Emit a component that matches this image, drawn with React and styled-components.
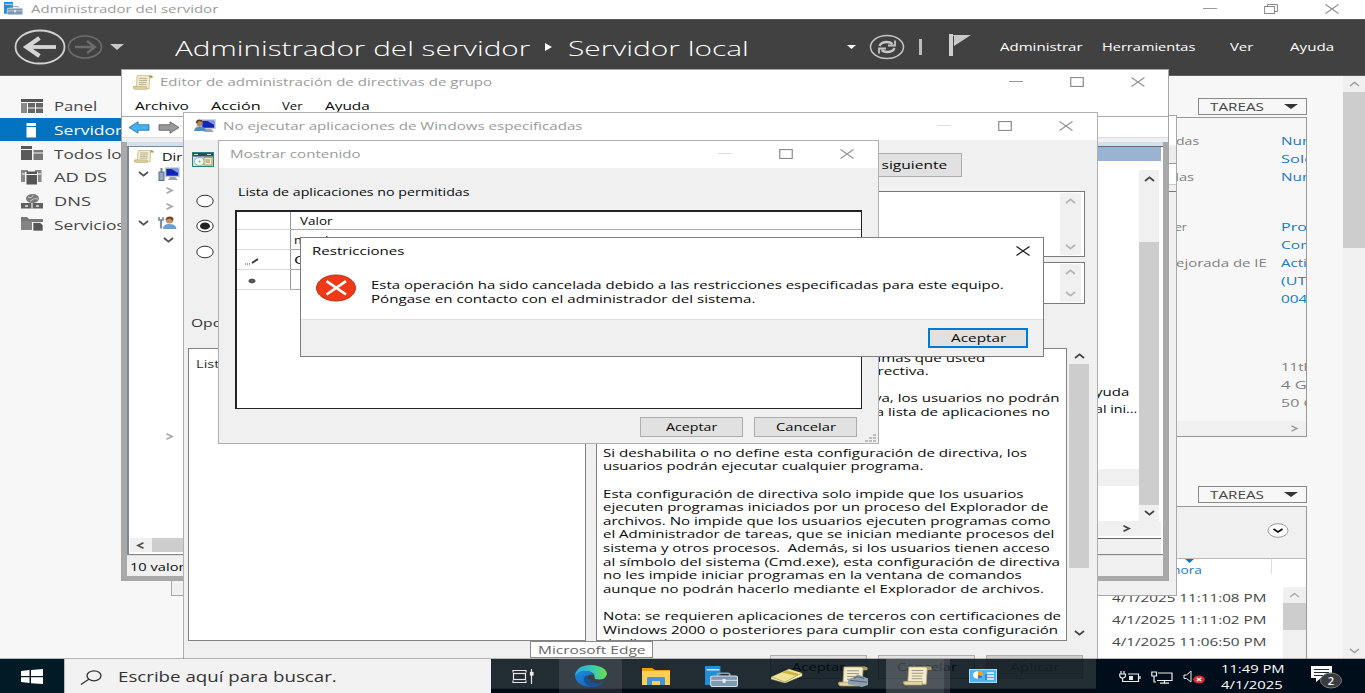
import React, { useLayoutEffect, useRef, useState } from "react";
import styled, { createGlobalStyle, css } from "styled-components";

const Global = createGlobalStyle`
  * { box-sizing: border-box; }
  html, body { margin: 0; padding: 0; overflow: hidden; }
  body { font-family: "Open Sans", "Noto Sans", sans-serif; color: #1a1a1a; }
  svg { display: block; flex: none; }
`;

/* ---------- text ---------- */

const FitBox = styled.span`
  display: block;
  flex: none;
  width: ${(p) => (p.$w ? `${p.$w}px` : "auto")};
  height: ${(p) => p.$lh}px;
  line-height: ${(p) => p.$lh}px;
  font-size: ${(p) => p.$size}px;
  font-weight: ${(p) => p.$weight};
  color: ${(p) => p.$color};
  text-align: left;
  white-space: pre;
`;
const FitInner = styled.span`
  display: inline-block;
  transform-origin: 0 50%;
`;

/* Wide-set label: stretched horizontally to w pixels, or by factor k. */
function Label({ w, k = 1.38, size = 10.6, lh = 14, weight = 500, color = "#080808", children }) {
  const ref = useRef(null);
  const [scale, setScale] = useState(k);
  useLayoutEffect(() => {
    if (w && ref.current) setScale(w / ref.current.offsetWidth);
  }, [w]);
  return (
    <FitBox $w={w} $size={size} $lh={lh} $weight={weight} $color={color}>
      <FitInner ref={ref} style={{ transform: `scaleX(${scale})` }}>{children}</FitInner>
    </FitBox>
  );
}

/* ---------- small drawings ---------- */

const CHEVRONS = {
  up: [11, 6, "M1 5 L5.5 1.4 L10 5"],
  down: [11, 6, "M1 1 L5.5 4.6 L10 1"],
  left: [9, 7, "M7.5 .8 L2 3.5 L7.5 6.2"],
  right: [9, 7, "M1.5 .8 L7 3.5 L1.5 6.2"],
};
function Chevron({ dir, color = "#505050", sw = 1.8 }) {
  const [w, h, d] = CHEVRONS[dir];
  return (
    <svg width={w} height={h} viewBox={`0 0 ${w} ${h}`}>
      <path d={d} fill="none" stroke={color} strokeWidth={sw} />
    </svg>
  );
}
const Triangle = ({ w = 14, h = 6, color = "#333" }) => (
  <svg width={w} height={h} viewBox="0 0 14 6" preserveAspectRatio="none">
    <path d="M0 0H14L7 6Z" fill={color} />
  </svg>
);
const MinIcon = ({ color = "#999" }) => (
  <svg width="14" height="10" viewBox="0 0 14 10"><path d="M0 4.5H14" stroke={color} /></svg>
);
const MaxIcon = () => (
  <svg width="14" height="10" viewBox="0 0 14 10"><rect x=".75" y=".5" width="12.5" height="9" fill="none" stroke="#8a8a8a" strokeWidth="1.2" /></svg>
);
const RestoreIcon = () => (
  <svg width="14" height="10" viewBox="0 0 14 10" fill="none" stroke="#8a8a8a"><rect x=".6" y="2.5" width="10" height="7" /><path d="M3.5 2.5V.5H13.4V7.5H10.6" /></svg>
);
const CloseIcon = ({ color = "#8f8f8f", sw = 1.1 }) => (
  <svg width="14" height="10" viewBox="0 0 14 10"><path d="M.5 .5L13.5 9.5M13.5 .5L.5 9.5" stroke={color} strokeWidth={sw} /></svg>
);
const ServerIcon = ({ w = 20, h = 14 }) => (
  <svg width={w} height={h} viewBox="0 0 32 22" preserveAspectRatio="none">
    <path d="M0 0H15V10H6V20H0Z" fill="#1f8fd8" /><path d="M1.5 4H14" stroke="#fff" strokeWidth="1.2" />
    <path d="M12 11V9Q12 7.5 14 7.5H22Q24 7.5 24 9V11" fill="none" stroke="#8ba3b6" strokeWidth="1.6" />
    <rect x="5.5" y="10.5" width="26" height="11" rx="1.5" fill="#7f9ab0" stroke="#d5e2ec" /><path d="M6 15H31" stroke="#dbe7ef" /><rect x="17" y="13.5" width="3" height="4" fill="#e5eef4" />
  </svg>
);
const ScrollIcon = ({ w = 20, h = 15, box = false }) => (
  <svg width={w} height={h} viewBox="0 0 30 22" preserveAspectRatio="none">
    <path d="M6 1H27Q30 1 29 4H25L24 20H2Q0 20 1 17H5Z" fill="#f3eccb" stroke="#b3a473" strokeWidth=".9" />
    <path d="M24 1Q29 0 29 4H25Z" fill="#b0954c" /><path d="M1 17H20V21H3Q0 21 1 17Z" fill="#e2d5a2" stroke="#a3925c" strokeWidth=".7" />
    <path d="M9 5H21M9 8H21M9 11H20M9 14H20" stroke="#8f8974" strokeWidth=".9" />
    {box && <g><path d="M15 12L20 9L30 13V20L24 22L10 19V14Z" fill="#8fa0ad" /><path d="M12 15L29 17M16 13L19 11L26 13" stroke="#536575" strokeWidth="1.2" fill="none" /></g>}
  </svg>
);
const BackArrow = () => (
  <svg width="52" height="36" viewBox="0 0 52 36">
    <ellipse cx="26" cy="18" rx="24.5" ry="16.5" fill="none" stroke="#d2d2d2" strokeWidth="1.8" />
    <path d="M42 18H14" stroke="#d6d6d6" strokeWidth="3.8" /><path d="M25.5 9L12.500 18L25.500 27" fill="none" stroke="#d6d6d6" strokeWidth="4.2" />
  </svg>
);
const ForwardArrow = () => (
  <svg width="37" height="26" viewBox="0 0 37 26">
    <ellipse cx="19" cy="13" rx="16.500" ry="11" fill="none" stroke="#6c6c6c" strokeWidth="1.6" />
    <path d="M9 13H28M21 7L29 13L21 19" fill="none" stroke="#6c6c6c" strokeWidth="2.4" />
  </svg>
);
const RefreshIcon = () => (
  <svg width="36" height="26" viewBox="0 0 36 26" fill="none" stroke="#c6c6c6">
    <ellipse cx="18" cy="13" rx="16.500" ry="11.500" strokeWidth="1.5" />
    <path d="M10.500 12Q12 8 18 8Q21 8 23.500 10M25.500 14Q24 18 18 18Q15 18 12.500 16" strokeWidth="2.3" />
    <path d="M26 6.500V11.500H19M10 19.500V14.500H17" strokeWidth="1.8" />
  </svg>
);
const FlagIcon = () => (
  <svg width="24" height="22" viewBox="0 0 24 22"><rect x="1" y="0" width="4" height="22" fill="#cfcfcf" /><path d="M5 1H23L6 12Z" fill="#c8c8c8" /><path d="M5.500 2V9" stroke="#444" /></svg>
);
const navIcons = {
  panel: <g fill="#666"><rect width="22" height="3" fill="#555" /><rect y="4" width="6" height="10" fill="#8a8a8a" /><rect x="7" y="4" width="7" height="4.500" /><rect x="15" y="4" width="7" height="4.500" /><rect x="7" y="9.500" width="7" height="4.500" /><rect x="15" y="9.500" width="7" height="4.500" /></g>,
  local: <g fill="#fff"><rect x="5.500" width="9.500" height="3" /><rect x="5.500" y="4" width="9.500" height="10.500" /></g>,
  all: <g fill="#5a5a5a"><rect width="11" height="3" /><rect y="4" width="11" height="10" /><rect x="12.500" y="4" width="9.500" height="2.500" fill="#777" /><rect x="12.500" y="7.500" width="9.500" height="6.500" fill="#777" /></g>,
  ad: <g fill="#555"><path d="M0 0H7V2H4V12H0ZM14 0H20.500V12H17V2H14Z" fill="#888" /><rect x="5.500" y="1.500" width="10.500" height="2.500" /><rect x="5.500" y="5" width="10.500" height="9.500" /><path d="M1 4H4M17 4H20" stroke="#fff" /></g>,
  dns: <g><ellipse cx="11.500" cy="4.500" rx="6.500" ry="4.500" fill="#7a7a7a" /><path d="M7 3Q11 5 12 1M9 7Q14 3 17 5" stroke="#ddd" fill="none" strokeWidth=".8" /><rect y="9" width="22" height="5.500" fill="#606060" /><path d="M11 9V14.500M4 12H7M15 12H18" stroke="#e8e8e8" strokeWidth="1.300" /></g>,
  files: <g><path d="M0 0H6L8 2H22V5H0Z" fill="#777" /><rect y="4" width="11" height="9" fill="#848484" /><path d="M12 5.500H19L22 8V14H12Z" fill="#555" stroke="#f7f7f7" strokeWidth=".7" /></g>,
};
const NavIcon = ({ name }) => <svg width="22" height="15" viewBox="0 0 22 15">{navIcons[name]}</svg>;
const ToolArrow = ({ flip, fill, edge }) => (
  <svg width="22" height="13" viewBox="0 0 22 13"><path transform={flip ? "translate(22 0) scale(-1 1)" : undefined} d="M1 6.500L10 .8V3.800H21V9.200H10V12.200Z" fill={fill} stroke={edge} strokeWidth=".9" /></svg>
);
const ComputerIcon = ({ user }) => (
  <svg width="22" height="14" viewBox="0 0 22 14">
    <rect x="7.500" y="1" width="13.500" height="8.500" fill="#1226b4" stroke="#c3cad4" strokeWidth="1.500" /><path d="M13 1.800H20.300V6Z" fill="#7c98ef" /><path d="M12 10H17L20 13H10Z" fill="#9aa2ad" />
    {user ? <g><ellipse cx="5.500" cy="4.500" rx="3" ry="3" fill="#b98560" /><path d="M2.500 4Q3 0 8 2" stroke="#4b3524" fill="none" strokeWidth="1.500" /><path d="M0 12Q1 7 6 7.500Q12 8 12 12Z" fill="#4a90c4" /></g>
      : <g><rect x="1" y="5" width="5" height="8.500" fill="#91a8c0" stroke="#5b7087" /><path d="M3.500 1V6" stroke="#68809a" strokeWidth="2" /></g>}
  </svg>
);
const UserIcon = () => (
  <svg width="19" height="14" viewBox="0 0 19 14"><path d="M3 4V12.500" stroke="#7890a8" strokeWidth="2.200" /><path d="M1 1V4H5V1" stroke="#6f87a0" strokeWidth="1.500" fill="none" /><ellipse cx="11.500" cy="4" rx="3.800" ry="3.600" fill="#c49069" /><path d="M7.500 4Q8 0 13.500 .8Q16.500 2 15 5L12 2.500Z" fill="#70472b" /><path d="M5 13Q5 8 11 8Q18 8 18.500 13Z" fill="#6aa0cf" /></svg>
);
const PolicyIcon = () => (
  <svg width="22" height="15" viewBox="0 0 22 15"><rect x=".5" y=".5" width="21" height="14" fill="#d7ddd8" stroke="#2f7f7a" /><rect x="1" y="1" width="20" height="3.500" fill="#2b4a66" /><path d="M2 2.500H6M15 2.500H19" stroke="#c8f0c0" /><ellipse cx="7.500" cy="9.500" rx="5" ry="4" fill="#f4f6f6" stroke="#8d9999" strokeWidth=".7" /><circle cx="7.500" cy="9.500" r="1" fill="#5cc265" /><rect x="12" y="5.500" width="8" height="7.500" fill="#f3edb4" stroke="#8b8653" strokeWidth=".7" /><path d="M13.500 8H18M13.500 10H18" stroke="#777" strokeWidth=".8" /></svg>
);
const ErrorIcon = () => (
  <svg width="40" height="28" viewBox="0 0 40 28"><ellipse cx="20" cy="14" rx="19.500" ry="13" fill="#f03a17" stroke="#b5341c" /><path d="M10.500 7.200L30 20.500M30 7.200L10.500 20.500" stroke="#fff" strokeWidth="2.700" /></svg>
);

/* ---------- shared window parts ---------- */

const Desktop = styled.div`
  position: relative;
  width: 1365px;
  height: 693px;
  overflow: hidden;
  background: #000d1a;
`;
const Window = styled.section`
  position: absolute;
  left: ${(p) => p.$x}px;
  top: ${(p) => p.$y}px;
  width: ${(p) => p.$w}px;
  height: ${(p) => p.$h}px;
  display: flex;
  flex-direction: column;
  overflow: hidden;
  background: ${(p) => p.$bg || "#f0f0f0"};
  border: 1px solid ${(p) => p.$edge || "#b4b4b4"};
`;
const TitleBar = styled.header`
  display: flex;
  flex: none;
  align-items: center;
  height: ${(p) => p.$h}px;
  padding: 0 ${(p) => p.$pr}px ${(p) => p.$pb || 0}px ${(p) => p.$pl}px;
  gap: ${(p) => p.$gap || 8}px;
  background: #fff;
`;
const Captions = styled.div`
  display: flex;
  align-items: center;
  gap: 47px;
  margin-left: auto;
`;
const PushButton = styled.button`
  display: flex;
  flex: none;
  align-items: center;
  justify-content: center;
  width: ${(p) => p.$w}px;
  height: ${(p) => p.$h || 20}px;
  padding: 0;
  font: inherit;
  background: ${(p) => (p.$off ? "#ccc" : "#e1e1e1")};
  border: ${(p) => (p.$focus ? "2px solid #0078d7" : "1px solid #adadad")};
`;
const ScrollBar = styled.div`
  display: flex;
  flex: none;
  flex-direction: column;
  align-items: center;
  width: ${(p) => p.$w || 20}px;
  background: #f0f0f0;
  ${(p) => p.$ml && css`margin-left: ${p.$ml}px;`}
`;
const ScrollArrow = styled.div`
  display: flex;
  flex: none;
  align-items: center;
  justify-content: center;
  width: 100%;
  height: ${(p) => p.$h || 16}px;
`;
const ScrollThumb = styled.div`
  width: 100%;
  flex: none;
  margin-top: ${(p) => p.$mt || 0}px;
  margin-bottom: auto;
  height: ${(p) => p.$h}px;
  background: #cdcdcd;
`;

/* ---------- server manager ---------- */

const Manager = styled.div`
  display: flex;
  flex-direction: column;
  width: 1365px;
  height: 659px;
  overflow: hidden;
  background: #f7f7f7;
`;
const Ribbon = styled.div`
  display: flex;
  flex: none;
  align-items: center;
  height: 57px;
  padding: 0 30px 2px 14px;
  background: #414141;
  border-top: 1px solid #555;
  border-bottom: 1px solid #5c5c5c;
`;
const RibbonItem = styled.div`
  flex: none;
  margin-left: ${(p) => p.$ml || 0}px;
  padding-top: ${(p) => p.$pt || 0}px;
  padding-bottom: ${(p) => p.$pb || 0}px;
`;
const RibbonRule = styled.div`
  width: 3px;
  height: 16px;
  margin-left: 14px;
  background: #bcbcbc;
`;
const ManagerBody = styled.div`
  display: flex;
  flex: 1;
  min-height: 0;
`;
const Sidebar = styled.nav`
  width: 170px;
  flex: none;
  padding-top: 18px;
`;
const NavItem = styled.div`
  display: flex;
  align-items: center;
  gap: 10.500px;
  height: 23.700px;
  padding: 1px 0 0 21px;
  overflow: hidden;
  background: ${(p) => (p.$on ? "#0173c0" : "transparent")};
`;
const Main = styled.main`
  display: flex;
  flex: 1;
  flex-direction: column;
  min-width: 0;
  padding: 22px 36px 0 800px;
`;
const TasksButton = styled.div`
  display: flex;
  flex: none;
  align-items: center;
  justify-content: space-between;
  align-self: flex-end;
  width: 109px;
  height: 17px;
  margin-top: ${(p) => p.$mt || 0}px;
  padding: 0 8px 0 11px;
  border: 1px solid #8a8a8a;
`;
const Properties = styled.div`
  display: flex;
  flex: none;
  flex-direction: column;
  height: 320px;
  margin-top: 2px;
  overflow: hidden;
  border: 1px solid #999;
`;
const PropertyRow = styled.div`
  display: flex;
  flex: none;
  height: 18.050px;
  align-items: center;
  margin-top: ${(p) => p.$mt || 0}px;
  padding-left: ${(p) => 204 + p.$dx}px;
`;
const PropertyName = styled.div`
  width: ${(p) => 106 - p.$dx}px;
  flex: none;
`;
const SideScroll = styled.div`
  display: flex;
  align-items: center;
  justify-content: flex-end;
  height: 15px;
  margin-top: auto;
  padding-right: 7px;
  background: #f0f0f0;
`;
const Events = styled.div`
  display: flex;
  flex: 1;
  flex-direction: column;
  margin-top: 3px;
  border: 1px solid #999;
  border-bottom: 0;
  background: #fff;
`;
const EventsFilter = styled.div`
  display: flex;
  flex: none;
  align-items: center;
  justify-content: flex-end;
  height: 52px;
  padding: 0 17px 4px 0;
  background: #f0f0f0;
  border-bottom: 1px solid #bbb;
`;
const EventsHead = styled.div`
  display: flex;
  height: 28px;
  padding-left: 201px;
`;
const HeadCell = styled.div`
  display: flex;
  flex-direction: column;
  width: 100px;
  height: 15px;
  border-right: 1px solid #ddd;
`;
const SortMark = styled.div`
  height: 4px;
  padding-left: 13px;
`;
const EventsBody = styled.div`
  display: flex;
  flex: 1;
  min-height: 0;
`;
const EventList = styled.div`
  flex: 1;
  padding-left: 141px;
`;
const EventRow = styled.div`
  display: flex;
  align-items: center;
  height: 22px;
`;

const NAV = [
  ["panel", "Panel", 43],
  ["local", "Servidor local", 111],
  ["all", "Todos los servidores", 163],
  ["ad", "AD DS", 53],
  ["dns", "DNS", 37],
  ["files", "Servicios de archivos", 168],
];
/* name, name width, value, value width, is link, space above, indent */
const PROPS = [
  ["das", 23, "Nunca", 46, true, 14, 1],
  ["", 0, "Solo descargar", 114, true, 0, 0],
  ["das", 24, "Nunca", 46, true, 0, -5],
  ["er", 12, "Protección", 80, true, 32, 0],
  ["", 0, "Configuración", 102, true, 0, 0],
  ["ejorada de IE", 91, "Activado", 60, true, 0, 1],
  ["", 0, "(UTC-05:00)", 86, true, 0, 0],
  ["", 0, "00454-40000", 92, true, 0, 0],
  ["", 0, "11th Gen", 64, false, 50, 0],
  ["", 0, "4 GB", 36, false, 0, 0],
  ["", 0, "50 GB", 45, false, 0, 0],
];
const EVENTS = ["4/1/2025 11:11:08 PM", "4/1/2025 11:11:02 PM", "4/1/2025 11:06:50 PM"];

const Tasks = ({ mt }) => (
  <TasksButton $mt={mt}><Label w={54} size={11} weight={400} color="#444">TAREAS</Label><Triangle w={14} h={5} /></TasksButton>
);

function ServerManager() {
  return (
    <Manager>
      <TitleBar $h={19} $pl={4} $pr={26} $pb={2} $gap={8}>
        <ServerIcon w={19} h={13} />
        <Label w={187} size={11} lh={16} color="#9a9a9a">Administrador del servidor</Label>
        <Captions><MinIcon /><RestoreIcon /><CloseIcon /></Captions>
      </TitleBar>
      <Ribbon>
        <BackArrow /><ForwardArrow />
        <RibbonItem $ml={7}><Triangle w={14} h={6} color="#c9c9c9" /></RibbonItem>
        <RibbonItem $ml={51} $pt={2}><Label w={355} size={21} lh={28} weight={300} color="#fff">Administrador del servidor</Label></RibbonItem>
        <RibbonItem $ml={15}><svg width="8" height="8" viewBox="0 0 8 8"><path d="M0 0L7 4L0 8Z" fill="#fff" /></svg></RibbonItem>
        <RibbonItem $ml={15} $pt={2}><Label w={181} size={21} lh={28} weight={300} color="#fff">Servidor local</Label></RibbonItem>
        <RibbonItem $ml={98}><Triangle w={9} h={4} color="#fff" /></RibbonItem>
        <RibbonItem $ml={13}><RefreshIcon /></RibbonItem>
        <RibbonRule />
        <RibbonItem $ml={26} $pb={3}><FlagIcon /></RibbonItem>
        <RibbonItem $ml={28} $pt={1}><Label w={82} size={11} color="#fff">Administrar</Label></RibbonItem>
        <RibbonItem $ml={20} $pt={1}><Label w={94} size={11} color="#fff">Herramientas</Label></RibbonItem>
        <RibbonItem $ml={34} $pt={1}><Label w={23} size={11} color="#fff">Ver</Label></RibbonItem>
        <RibbonItem $ml={37} $pt={1}><Label w={44} size={11} color="#fff">Ayuda</Label></RibbonItem>
      </Ribbon>
      <ManagerBody>
        <Sidebar>
          {NAV.map(([icon, text, w]) => (
            <NavItem key={icon} $on={icon === "local"}>
              <NavIcon name={icon} />
              <Label w={w} size={12.800} lh={18} color={icon === "local" ? "#fff" : "#444"}>{text}</Label>
            </NavItem>
          ))}
        </Sidebar>
        <Main>
          <Tasks />
          <Properties>
            {PROPS.map(([name, nw, value, vw, link, mt, dx], i) => (
              <PropertyRow key={i} $mt={mt} $dx={dx}>
                <PropertyName $dx={dx}>{name && <Label w={nw} size={11} color="#808080">{name}</Label>}</PropertyName>
                <Label w={vw} size={11} color={link ? "#2079c4" : "#808080"}>{value}</Label>
              </PropertyRow>
            ))}
            <SideScroll><Chevron dir="right" color="#999" sw={1.400} /></SideScroll>
          </Properties>
          <Tasks mt={49} />
          <Events>
            <EventsFilter>
              <svg width="22" height="15" viewBox="0 0 22 15"><ellipse cx="11" cy="7.500" rx="10" ry="6.800" fill="#fff" stroke="#999" /><path d="M6.500 6L11 9L15.500 6" fill="none" stroke="#111" strokeWidth="1.800" /></svg>
            </EventsFilter>
            <EventsHead>
              <HeadCell>
                <SortMark><Triangle w={9} h={4} color="#0b78c5" /></SortMark>
                <Label w={30} size={11} color="#2079c4">hora</Label>
              </HeadCell>
            </EventsHead>
            <EventsBody>
              <EventList>
                {EVENTS.map((e) => <EventRow key={e}><Label w={155} size={11} color="#444">{e}</Label></EventRow>)}
              </EventList>
              <ScrollBar $w={23}>
                <ScrollArrow><Chevron dir="up" color="#aaa" sw={1.300} /></ScrollArrow>
                <ScrollThumb $h={27} />
              </ScrollBar>
            </EventsBody>
          </Events>
        </Main>
        <ScrollBar $w={22}>
          <ScrollArrow><Chevron dir="up" color="#999" sw={1.300} /></ScrollArrow>
          <ScrollThumb $h={156} />
          <ScrollArrow><Chevron dir="down" color="#999" sw={1.300} /></ScrollArrow>
        </ScrollBar>
      </ManagerBody>
    </Manager>
  );
}

/* ---------- group policy editor ---------- */

const BackWindowStrip = styled.div`
  height: ${(p) => p.$h}px;
  flex: none;
  background: ${(p) => p.$bg};
  border-bottom: 1px solid ${(p) => p.$line};
`;
const MenuBar = styled.div`
  display: flex;
  flex: none;
  align-items: center;
  height: 22px;
  gap: 22px;
  padding-left: 13px;
  background: #fff;
  border-bottom: 1px solid #aaa;
`;
const ToolBar = styled.div`
  display: flex;
  flex: none;
  align-items: center;
  height: 21px;
  gap: 8px;
  padding: 1px 0 0 6px;
  background: #fff;
  border-bottom: 1px solid #ddd;
`;
const EditorFrame = styled.div`
  display: flex;
  flex: 1;
  flex-direction: column;
  min-height: 0;
  margin-top: 4px;
  border: solid #a9a9a9;
  border-width: 0 5px 4px 5px;
`;
const EditorPanes = styled.div`
  display: flex;
  flex: 1;
  min-height: 0;
  border-top: 4px solid #d3e0ee;
  border-bottom: 1px solid #888;
`;
const TreePane = styled.div`
  display: flex;
  flex-direction: column;
  width: 400px;
  flex: none;
  background: #fff;
  border-left: 2px solid #7b8794;
  border-top: 1px solid #7b8794;
`;
const TreeRow = styled.div`
  display: flex;
  flex: none;
  align-items: center;
  height: 16.400px;
  gap: ${(p) => p.$gap || 9}px;
  padding-left: ${(p) => p.$pl}px;
  margin-top: ${(p) => p.$mt || 0}px;
`;
const TreeScroll = styled.div`
  display: flex;
  align-items: center;
  height: 14px;
  margin: auto 0 2px 1px;
  padding-left: 6px;
  gap: 7px;
  background: #f0f0f0;
`;
const TreeThumb = styled.div`
  flex: 1;
  height: 14px;
  background: #cdcdcd;
`;
const ListPane = styled.div`
  display: flex;
  flex: 1;
  flex-direction: column;
  padding-right: 2px;
  border-top: 1px solid #667;
  background: #fff;
`;
const ListHead = styled.div`
  height: 14px;
  flex: none;
  background: #99b4d1;
`;
const ListBody = styled.div`
  display: flex;
  height: 360px;
  flex: none;
  padding-top: 9px;
  padding-right: 2px;
`;
const ListRows = styled.div`
  display: flex;
  flex: 1;
  flex-direction: column;
  padding-top: 213px;
`;
const ListRow = styled.div`
  display: flex;
  flex: none;
  align-items: center;
  height: 17.300px;
  margin-top: ${(p) => p.$mt || 0}px;
  padding-left: 568px;
  background: ${(p) => (p.$hot ? "#f0f0f0" : "transparent")};
`;
const ListScroll = styled.div`
  display: flex;
  align-items: center;
  justify-content: flex-end;
  height: 15px;
  padding-right: 30px;
  background: #f0f0f0;
`;
const StatusBar = styled.div`
  display: flex;
  flex: none;
  align-items: center;
  height: 21px;
  padding: 2px 0 0 3px;
  background: #f0f0f0;
  border-top: 1px solid #ddd;
`;
const ListStatus = styled.div`
  height: 16px;
  margin-top: auto;
  background: #f0f0f0;
  border-top: 1px solid #666;
`;

function PolicyEditor() {
  return (
    <Window $x={121} $y={69} $w={1048} $h={512} $edge="#a6a6a6" $bg="#f0f0f0">
      <TitleBar $h={25} $pl={11} $pr={23} $pb={1} $gap={7}>
        <ScrollIcon w={20} h={15} />
        <Label w={332} size={10.800} color="#9a9a9a">Editor de administración de directivas de grupo</Label>
        <Captions><MinIcon /><MaxIcon /><CloseIcon /></Captions>
      </TitleBar>
      <MenuBar>
        <Label w={54}>Archivo</Label><Label w={49}>Acción</Label><Label w={21}>Ver</Label><Label w={45}>Ayuda</Label>
      </MenuBar>
      <ToolBar>
        <ToolArrow fill="#45b3f0" edge="#2777b3" /><ToolArrow flip fill="#999" edge="#666" />
      </ToolBar>
      <EditorFrame>
        <EditorPanes>
          <TreePane>
            <TreeRow $pl={5} $mt={1.500} $gap={8}><ScrollIcon w={20} h={13} /><Label k={1.380}>Directiva</Label></TreeRow>
            <TreeRow $pl={9} $mt={0.500}><Chevron dir="down" /><ComputerIcon /></TreeRow>
            <TreeRow $pl={36} $mt={0.500}><Chevron dir="right" color="#aaa" /></TreeRow>
            <TreeRow $pl={36}><Chevron dir="right" color="#aaa" /></TreeRow>
            <TreeRow $pl={9}><Chevron dir="down" /><UserIcon /></TreeRow>
            <TreeRow $pl={34}><Chevron dir="down" /></TreeRow>
            <TreeRow $pl={36} $mt={180}><Chevron dir="right" color="#aaa" /></TreeRow>
            <TreeScroll><Chevron dir="left" /><TreeThumb /></TreeScroll>
          </TreePane>
          <ListPane>
            <ListHead />
            <ListBody>
              <ListRows>
                <ListRow><Label w={34}>yuda</Label></ListRow>
                <ListRow><Label w={43}>al ini...</Label></ListRow>
                <ListRow $mt={34} />
                <ListRow $hot />
              </ListRows>
              <ScrollBar>
                <ScrollArrow $h={18}><Chevron dir="up" color="#444" /></ScrollArrow>
                <ScrollThumb $mt={54} $h={263} />
                <ScrollArrow><Chevron dir="down" color="#444" /></ScrollArrow>
              </ScrollBar>
            </ListBody>
            <ListScroll><Chevron dir="right" color="#444" /></ListScroll>
            <ListStatus />
          </ListPane>
        </EditorPanes>
        <StatusBar><Label k={1.380}>10 valores</Label></StatusBar>
      </EditorFrame>
    </Window>
  );
}

/* ---------- policy setting ---------- */

const SettingBody = styled.div`
  display: flex;
  flex: 1;
  flex-direction: column;
  min-height: 0;
`;
const SettingTop = styled.div`
  display: flex;
  flex: none;
  align-items: center;
  justify-content: space-between;
  height: 51px;
  padding: 0 135px 1px 8px;
`;
const SettingForm = styled.div`
  display: flex;
  flex: none;
  justify-content: space-between;
  height: 119px;
  padding: 0 12px 0 12px;
`;
const RadioColumn = styled.div`
  display: flex;
  flex-direction: column;
  gap: 11.300px;
  padding-top: 3px;
`;
const FieldColumn = styled.div`
  display: flex;
  flex-direction: column;
  gap: 5px;
  width: 500px;
`;
const TextArea = styled.div`
  display: flex;
  justify-content: flex-end;
  height: ${(p) => p.$h}px;
  padding: 1px 3px 1px 0;
  background: #fff;
  border: 1px solid #7a7a7a;
`;
const Caption = styled.div`
  display: flex;
  flex: none;
  height: 38px;
  padding: 6px 0 0 7px;
`;
const Panels = styled.div`
  display: flex;
  flex: none;
  height: 293px;
  margin-left: 4px;
`;
const OptionPanel = styled.div`
  width: 398px;
  margin-right: 10px;
  padding: 8px 8px 8px 7px;
  background: #fff;
  border: 1px solid #828282;
`;
const HelpPanel = styled.div`
  width: 471px;
  padding: 1.500px 0 0 6px;
  overflow: hidden;
  background: #fff;
  border: 1px solid #828282;
`;
const HelpLine = styled.div`
  height: 13.620px;
`;
const FooterButtons = styled.div`
  display: flex;
  justify-content: flex-end;
  gap: 11px;
  padding: 14px 14px 0 0;
`;

const HELP = [
  ["Impide que Windows ejecute los programas que usted", 382],
  ["especifique en esta configuración de directiva.", 326],
  null,
  ["Si habilita esta configuración de directiva, los usuarios no podrán", 456],
  ["ejecutar los programas que agregue a la lista de aplicaciones no", 447],
  ["permitidas.", 76],
  null,
  ["Si deshabilita o no define esta configuración de directiva, los", 424],
  ["usuarios podrán ejecutar cualquier programa.", 320],
  null,
  ["Esta configuración de directiva solo impide que los usuarios", 420],
  ["ejecuten programas iniciados por un proceso del Explorador de", 445],
  ["archivos. No impide que los usuarios ejecuten programas como", 448],
  ["el Administrador de tareas, que se inician mediante procesos del", 451],
  ["sistema y otros procesos.  Además, si los usuarios tienen acceso", 447],
  ["al símbolo del sistema (Cmd.exe), esta configuración de directiva", 457],
  ["no les impide iniciar programas en la ventana de comandos", 419],
  ["aunque no podrán hacerlo mediante el Explorador de archivos.", 441],
  null,
  ["Nota: se requieren aplicaciones de terceros con certificaciones de", 458],
  ["Windows 2000 o posteriores para cumplir con esta configuración", 455],
  ["de directiva.", 84],
];

const Radio = ({ on }) => (
  <svg width="18" height="14" viewBox="0 0 18 14"><ellipse cx="9" cy="7" rx="8.200" ry="5.800" fill="#fff" stroke="#333" />{on && <ellipse cx="9" cy="7" rx="5" ry="3.600" fill="#222" />}</svg>
);

const FieldScroll = () => (
  <ScrollBar $w={21}>
    <ScrollArrow><Chevron dir="up" color="#b5b5b5" /></ScrollArrow>
    <ScrollThumb $h={0} />
    <ScrollArrow><Chevron dir="down" color="#b5b5b5" /></ScrollArrow>
  </ScrollBar>
);

function PolicySetting() {
  return (
    <Window $x={183} $y={112} $w={915} $h={577} $edge="#b0b0b0">
      <TitleBar $h={27} $pl={10} $pr={24} $pb={1} $gap={7}>
        <ComputerIcon user />
        <Label w={360} size={10.800} color="#9a9a9a">No ejecutar aplicaciones de Windows especificadas</Label>
        <Captions><MinIcon color="#ddd" /><MaxIcon /><CloseIcon /></Captions>
      </TitleBar>
      <SettingBody>
        <SettingTop>
          <svg width="22" height="27" viewBox="0 0 22 27"><PolicyIcon /></svg>
          <PushButton $w={137} $h={24}><Label w={107}>Valor siguiente</Label></PushButton>
        </SettingTop>
        <SettingForm>
          <RadioColumn><Radio /><Radio on /><Radio /></RadioColumn>
          <FieldColumn>
            <TextArea $h={66}><FieldScroll /></TextArea>
            <TextArea $h={42}><FieldScroll /></TextArea>
          </FieldColumn>
        </SettingForm>
        <Caption><Label w={72} color="#333">Opciones:</Label></Caption>
        <Panels>
          <OptionPanel><Label k={1.380} color="#333">Lista de aplicaciones</Label></OptionPanel>
          <HelpPanel>
            {HELP.map((l, i) => <HelpLine key={i}>{l && <Label w={l[1]}>{l[0]}</Label>}</HelpLine>)}
          </HelpPanel>
          <ScrollBar $w={20} $ml={2}>
            <ScrollArrow><Chevron dir="up" color="#444" /></ScrollArrow>
            <ScrollThumb $h={204} />
            <ScrollArrow><Chevron dir="down" color="#444" /></ScrollArrow>
          </ScrollBar>
        </Panels>
        <FooterButtons>
          <PushButton $w={97} $h={24}><Label w={53}>Aceptar</Label></PushButton>
          <PushButton $w={97} $h={24}><Label w={60}>Cancelar</Label></PushButton>
          <PushButton $w={97} $h={24} $off><Label w={50} color="#888">Aplicar</Label></PushButton>
        </FooterButtons>
      </SettingBody>
    </Window>
  );
}

/* ---------- content list dialog ---------- */

const ContentBody = styled.div`
  display: flex;
  flex: 1;
  flex-direction: column;
  padding: 17px 16px 0 16px;
`;
const ContentCaption = styled.div`
  height: 25px;
  padding-left: 3px;
`;
const Grid = styled.div`
  height: 199px;
  flex: none;
  background: #fff;
  border: solid #222;
  border-width: 2px 1.500px 1.500px 2px;
`;
const GridRow = styled.div`
  display: flex;
  height: ${(p) => p.$h || 20}px;
`;
const GridMark = styled.div`
  display: flex;
  flex: none;
  align-items: center;
  width: 54px;
  padding: 3px 0 0 8px;
  border-right: 1px solid #999;
  border-bottom: 1px solid #ddd;
`;
const GridCell = styled.div`
  display: flex;
  flex: 1;
  align-items: center;
  padding-left: ${(p) => p.$pl || 3}px;
  border-bottom: 1px solid #aaa;
`;
const ContentFooter = styled.div`
  display: flex;
  justify-content: flex-end;
  gap: 11px;
  padding: 8px 5px 0 0;
`;
const Grip = styled.svg`
  position: absolute;
  right: 2px;
  bottom: 1px;
`;

function ContentDialog() {
  return (
    <Window $x={218} $y={140} $w={661} $h={304} $edge="#b0b0b0">
      <TitleBar $h={27} $pl={11} $pr={24} $pb={2}>
        <Label w={130} size={10.800} color="#9a9a9a">Mostrar contenido</Label>
        <Captions><MinIcon color="#ddd" /><MaxIcon /><CloseIcon /></Captions>
      </TitleBar>
      <ContentBody>
        <ContentCaption><Label w={232}>Lista de aplicaciones no permitidas</Label></ContentCaption>
        <Grid>
          <GridRow $h={18}><GridMark /><GridCell $pl={9}><Label w={33}>Valor</Label></GridCell></GridRow>
          <GridRow><GridMark /><GridCell><Label w={49}>msedge</Label></GridCell></GridRow>
          <GridRow>
            <GridMark><svg width="14" height="8" viewBox="0 0 14 8"><path d="M0 7H6" stroke="#444" strokeDasharray="1 1" /><path d="M7 6L13 2" stroke="#333" strokeWidth="1.800" /></svg></GridMark>
            <GridCell><Label w={64}>Chrome</Label></GridCell>
          </GridRow>
          <GridRow>
            <GridMark><svg width="14" height="8" viewBox="0 0 14 8"><ellipse cx="7" cy="4" rx="3.300" ry="2.200" fill="#444" /><path d="M3.500 4H10.500M7 1.500V6.500" stroke="#666" /></svg></GridMark>
            <GridCell />
          </GridRow>
        </Grid>
        <ContentFooter>
          <PushButton $w={103}><Label w={51}>Aceptar</Label></PushButton>
          <PushButton $w={103}><Label w={60}>Cancelar</Label></PushButton>
        </ContentFooter>
      </ContentBody>
      <Grip width="12" height="8" viewBox="0 0 12 8"><path d="M9 0H12V2H9ZM5 3H8V5H5ZM9 3H12V5H9ZM1 6H4V8H1ZM5 6H8V8H5ZM9 6H12V8H9Z" fill="#bdbdbd" /></Grip>
    </Window>
  );
}

/* ---------- error dialog ---------- */

const ErrorBody = styled.div`
  display: flex;
  flex: 1;
  gap: 15px;
  padding: 9px 0 0 15px;
  background: #fff;
`;
const ErrorText = styled.div`
  padding-top: 5px;
`;
const ErrorFooter = styled.div`
  display: flex;
  flex: none;
  align-items: center;
  justify-content: flex-end;
  height: 37px;
  padding-right: 15px;
  background: #f0f0f0;
  border-top: 1px solid #dfdfdf;
`;

function ErrorDialog() {
  return (
    <Window $x={300} $y={237} $w={744} $h={120} $edge="#7c7c7c" $bg="#fff">
      <TitleBar $h={27} $pl={11} $pr={13} $pb={2}>
        <Label w={92} size={10.800}>Restricciones</Label>
        <Captions><CloseIcon color="#222" sw={1.300} /></Captions>
      </TitleBar>
      <ErrorBody>
        <ErrorIcon />
        <ErrorText>
          <Label w={633} lh={13.600}>Esta operación ha sido cancelada debido a las restricciones especificadas para este equipo.</Label>
          <Label w={384} lh={13.600}>Póngase en contacto con el administrador del sistema.</Label>
        </ErrorText>
      </ErrorBody>
      <ErrorFooter><PushButton $w={100} $focus><Label w={55}>Aceptar</Label></PushButton></ErrorFooter>
    </Window>
  );
}

/* ---------- taskbar ---------- */

const Bar = styled.footer`
  position: absolute;
  left: 0;
  bottom: 0;
  display: flex;
  width: 1365px;
  height: 35px;
  border-top: 1px solid rgba(120, 120, 120, 0.5);
`;
const StartCell = styled.div`
  display: flex;
  align-items: center;
  width: 64px;
  padding: 1px 0 0 21px;
  background: #001a26;
`;
const SearchCell = styled.div`
  display: flex;
  align-items: center;
  width: 427px;
  gap: 16px;
  padding: 2px 0 0 15px;
  background: #f2f2f2;
  border-left: 1px solid #bbb;
`;
const TaskCells = styled.div`
  display: flex;
  width: 605px;
  background: rgba(0, 12, 20, 0.86);
`;
const TaskCell = styled.div`
  display: flex;
  align-items: center;
  justify-content: center;
  width: ${(p) => p.$w}px;
  padding-left: ${(p) => p.$pl || 0}px;
  background: ${(p) => (p.$on ? `rgba(255,255,255,${p.$on})` : "transparent")};
`;
const Tray = styled.div`
  display: flex;
  flex: 1;
  align-items: center;
  padding: 2px 0 0 23px;
  gap: 10px;
  background: #000d1b;
`;
const Clock = styled.div`
  display: flex;
  flex-direction: column;
  align-items: center;
  gap: 2.500px;
  width: 64px;
  margin-left: 5px;
`;
const Notify = styled.div`
  display: flex;
  margin-left: 17px;
`;
const Tip = styled.div`
  position: absolute;
  left: 530px;
  top: 641px;
  display: flex;
  align-items: center;
  justify-content: center;
  width: 123px;
  height: 17px;
  background: #fff;
  border: 1px solid #8a8a8a;
`;

const WindowsLogo = () => (
  <svg width="22" height="15" viewBox="0 0 22 15" fill="#fff"><path d="M0 2L8.500 1V7H0ZM10 .9L22 0V7H10ZM0 8.200H8.500V14L0 13ZM10 8.200H22V15L10 14.200Z" /></svg>
);
const SearchGlass = () => (
  <svg width="22" height="15" viewBox="0 0 22 15" fill="none" stroke="#333" strokeWidth="1.300"><ellipse cx="14" cy="5.800" rx="7" ry="5" /><path d="M8.800 9.200L1 14.500" /></svg>
);
const TaskView = () => (
  <svg width="22" height="15" viewBox="0 0 22 15" fill="none" stroke="#e8e8e8" strokeWidth="1.200"><path d="M1 3.500V1M1 1.500H14M14 1V3.500M1 11.500V14M1 13.500H14M14 14V11.500" /><rect x="1.500" y="4.500" width="12" height="6" /><path d="M19.500 0V15" /><rect x="18.500" y="3.500" width="2.500" height="2.500" fill="#fff" /></svg>
);
const EdgeIcon = () => (
  <svg width="32" height="22" viewBox="0 0 32 22">
    <defs>
      <linearGradient id="edgeTop" x1="0" x2="1"><stop offset="0" stopColor="#2aa9e0" /><stop offset=".55" stopColor="#36c8b4" /><stop offset="1" stopColor="#6be04c" /></linearGradient>
      <linearGradient id="edgeLow" x1="0" y1="0" x2="1" y2="1"><stop offset="0" stopColor="#1c8fdc" /><stop offset="1" stopColor="#1456a5" /></linearGradient>
    </defs>
    <path d="M0 10Q2 0 16 0Q31 1 32 9Q31 14.500 24 14.500Q19 14.500 19.500 12Q20 7 12 6Q4 6 0 11Z" fill="url(#edgeTop)" />
    <path d="M0 11Q4 5 12 6Q18 7 19 10Q12 9 12 13Q14 19 24 18L29 17Q24 22 16 22Q1 21 0 11Z" fill="url(#edgeLow)" />
    <path d="M10 11Q6 17 15 21.500Q24 22 29.500 16.500Q23 19 17 17Q12 15 13 10.500Z" fill="#1b4f96" />
  </svg>
);
const FolderIcon = () => (
  <svg width="30" height="17" viewBox="0 0 30 17"><path d="M1 0H11L14 2H29V16H1Z" fill="#e8a40e" /><path d="M1 3H29V17H1Z" fill="#fdcf55" /><path d="M6 17V10Q6 9 8 9H22Q24 9 24 10V17H19V13H11V17Z" fill="#3f96dd" /></svg>
);
const BookIcon = () => (
  <svg width="32" height="14" viewBox="0 0 32 14"><path d="M0 8L18 0L31 4L14 13Z" fill="#ede391" /><path d="M0 8L14 13L31 4V7L14 14L0 10Z" fill="#faf6d8" stroke="#a99b45" strokeWidth=".5" /><path d="M11 3.500L26 7L28 5L16 1.500" fill="#cdb53c" /></svg>
);
const PanelIcon = () => (
  <svg width="28" height="14" viewBox="0 0 28 14"><rect x=".5" y=".5" width="27" height="13" fill="#4cb4f2" stroke="#a5dcff" /><ellipse cx="9" cy="6" rx="5" ry="3.800" fill="#fff" /><path d="M9 6V1.500Q14 2 14 6Z" fill="#f0a020" /><path d="M9 6L14 6.500Q13 10 9 9.800Z" fill="#2f7ec0" /><path d="M18 4H25M18 7H25M18 10H25" stroke="#e9f7ff" strokeWidth="1.500" /><path d="M17 11V5" stroke="#176aa8" /></svg>
);

function Taskbar() {
  return (
    <Bar>
      <StartCell><WindowsLogo /></StartCell>
      <SearchCell><SearchGlass /><Label w={219} size={14} lh={20} weight={400} color="#333">Escribe aquí para buscar.</Label></SearchCell>
      <TaskCells>
        <TaskCell $w={64}><TaskView /></TaskCell>
        <TaskCell $w={4} />
        <TaskCell $w={63} $on={0.100}><EdgeIcon /></TaskCell>
        <TaskCell $w={67}><FolderIcon /></TaskCell>
        <TaskCell $w={64}><ServerIcon w={33} h={21} /></TaskCell>
        <TaskCell $w={66} $pl={2}><BookIcon /></TaskCell>
        <TaskCell $w={67}><ScrollIcon w={30} h={21} box /></TaskCell>
        <TaskCell $w={58} $pl={5} $on={0.200}><ScrollIcon w={29} h={20} /></TaskCell>
        <TaskCell $w={6} $on={0.120} />
        <TaskCell $w={66}><PanelIcon /></TaskCell>
      </TaskCells>
      <Tray>
        <svg width="22" height="12" viewBox="0 0 22 12" fill="none" stroke="#eee" strokeWidth="1.200"><path d="M9 3H19.500V10.500H7M21 5V8M2 0V3M5 0V3M.8 3H6.500V5Q6 7 3.600 7Q1 7 .8 5ZM3.600 7V10.500H8" /><rect x="10" y="5" width="4" height="4" fill="#eee" stroke="none" /></svg>
        <svg width="22" height="13" viewBox="0 0 22 13" fill="none" stroke="#eee" strokeWidth="1.200"><path d="M7 2H21V9.500H6M13.500 9.500V12M9 12.200H18M.8 1H5.500V5H.8ZM3 5V11H5" /></svg>
        <svg width="22" height="14" viewBox="0 0 22 14"><path d="M1 5H3.500L8 1V12L3.500 8.500H1Z" fill="none" stroke="#eee" /><ellipse cx="16" cy="9.500" rx="5.800" ry="4" fill="#e02b35" /><path d="M13.800 8L18.200 11M18.200 8L13.800 11" stroke="#fff" strokeWidth="1.300" /></svg>
        <Clock><Label w={63} size={11} color="#fff">11:49 PM</Label><Label w={62} size={11} color="#fff">4/1/2025</Label></Clock>
        <Notify>
          <svg width="34" height="24" viewBox="0 0 34 24"><path d="M0 1H21V13H10L5 17V13H0Z" fill="#fff" /><path d="M3 4.500H18M3 7.500H18M3 10.500H12" stroke="#222b36" /><ellipse cx="20" cy="15.500" rx="10.500" ry="7.500" fill="#3a3d40" stroke="#777" /><text x="20" y="19.500" textAnchor="middle" fontSize="11" fontWeight="600" fill="#fff">2</text></svg>
        </Notify>
      </Tray>
    </Bar>
  );
}

export default function App() {
  return (
    <>
      <Global />
      <Desktop>
        <ServerManager />
        <Window $x={171} $y={115} $w={1006} $h={481} $edge="#a8a8a8">
          <BackWindowStrip $h={30} $bg="#fff" $line="#f0f0f0" />
          <BackWindowStrip $h={18} $bg="#ececec" $line="#999" />
          <BackWindowStrip $h={21} $bg="#fff" $line="#ccc" />
          <BackWindowStrip $h={7} $bg="#f0f0f0" $line="#777" />
        </Window>
        <PolicyEditor />
        <PolicySetting />
        <ContentDialog />
        <ErrorDialog />
        <Taskbar />
        <Tip><Label w={107} size={11} color="#666">Microsoft Edge</Label></Tip>
      </Desktop>
    </>
  );
}
